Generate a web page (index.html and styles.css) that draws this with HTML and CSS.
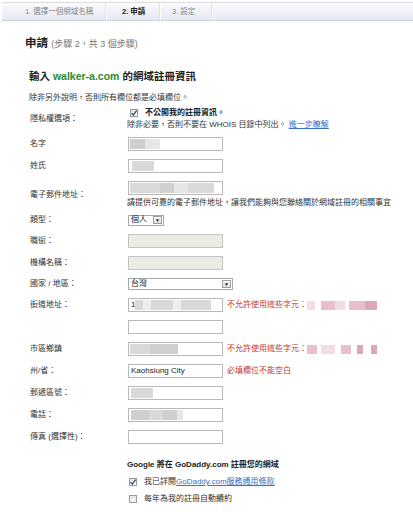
FILE: index.html
```html
<!DOCTYPE html>
<html lang="zh-Hant">

<head>
  <meta charset="UTF-8" />
  <meta name="viewport" content="width=device-width, initial-scale=1.0" />
  <title>申請</title>
  <link rel="stylesheet" href="styles.css">
</head>

<body>
  <!-- Step tabs -->
  <div class="tabs">
    <div class="tab tab-1">1. 選擇一個網域名稱</div>
    <div class="tab tab-2 active">2. 申請</div>
    <div class="tab tab-3">3. 設定</div>
  </div>

  <div class="page">
    <h1>申請 <span class="steps">(步驟 2，共 3 個步驟)</span></h1>
    <h2>輸入 <span class="domain">walker-a.com</span> 的網域註冊資訊</h2>
    <p class="note">除非另外說明，否則所有欄位都是必填欄位。</p>

    <form class="reg-form">
      <!-- Privacy -->
      <div class="row row-privacy">
        <div class="label">隱私權選項：</div>
        <div class="field">
          <div class="check-line">
            <span class="box checked"><svg viewBox="0 0 8 8" width="8" height="8"><path d="M1.5 4.2 L3.3 6 L6.6 1.6" fill="none" stroke="#2b3f6b" stroke-width="1.2"/></svg></span>
            <b>不公開我的註冊資訊。</b>
          </div>
          <div class="sub">除非必要，否則不要在 WHOIS 目錄中列出。 <a href="#">進一步瞭解</a></div>
        </div>
      </div>

      <!-- Name -->
      <div class="row row-first">
        <div class="label">名字</div>
        <div class="field">
          <div class="input"><span class="blur b1" style="width:15px"></span><span class="blur b3" style="width:15px"></span></div>
        </div>
      </div>

      <div class="row">
        <div class="label">姓氏</div>
        <div class="field">
          <div class="input"><span class="blur b2" style="width:22px;margin-left:2px"></span></div>
        </div>
      </div>

      <!-- Email -->
      <div class="row">
        <div class="label">電子郵件地址：</div>
        <div class="field">
          <div class="input"><span class="blur b2" style="width:30px"></span><span class="blur b1" style="width:14px"></span><span class="blur b3" style="width:14px"></span><span class="blur b2" style="width:26px"></span></div>
          <div class="help">請提供可靠的電子郵件地址，讓我們能夠與您聯絡關於網域註冊的相關事宜</div>
        </div>
      </div>

      <!-- Type -->
      <div class="row row-type">
        <div class="label">類型：</div>
        <div class="field">
          <div class="select small">個人<span class="arrow">▼</span></div>
        </div>
      </div>

      <div class="row">
        <div class="label">職銜：</div>
        <div class="field">
          <div class="input disabled"></div>
        </div>
      </div>

      <div class="row">
        <div class="label">機構名稱：</div>
        <div class="field">
          <div class="input disabled"></div>
        </div>
      </div>

      <div class="row">
        <div class="label">國家 / 地區：</div>
        <div class="field">
          <div class="select wide">台灣<span class="arrow">▼</span></div>
        </div>
      </div>

      <!-- Address -->
      <div class="row">
        <div class="label">街道地址：</div>
        <div class="field">
          <div class="input"><span class="txt">1</span><span class="blur b2" style="width:8px"></span><span class="blur b4" style="width:8px"></span><span class="blur b2" style="width:22px"></span><span class="blur b4" style="width:8px"></span><span class="blur b2" style="width:30px"></span></div>
          <span class="error">不允許使用這些字元：<span class="pink p1" style="width:8px"></span><span class="pink p2" style="width:14px;margin-left:6px"></span><span class="pink p1" style="width:10px"></span><span class="pink p2" style="width:16px;margin-left:4px"></span><span class="pink p3" style="width:12px"></span></span>
        </div>
      </div>

      <div class="row">
        <div class="label"></div>
        <div class="field">
          <div class="input"></div>
        </div>
      </div>

      <div class="row">
        <div class="label">市區鄉鎮</div>
        <div class="field">
          <div class="input"><span class="blur b2" style="width:20px"></span><span class="blur b1" style="width:28px"></span></div>
          <span class="error">不允許使用這些字元：<span class="pink p2" style="width:10px"></span><span class="pink p1" style="width:14px;margin-left:4px"></span><span class="pink p2" style="width:10px;margin-left:6px"></span><span class="pink p3" style="width:6px;margin-left:6px"></span><span class="pink p3" style="width:6px;margin-left:8px"></span></span>
        </div>
      </div>

      <div class="row">
        <div class="label">州/省：</div>
        <div class="field">
          <div class="input"><span class="txt">Kaohsiung City</span></div>
          <span class="error">必填欄位不能空白</span>
        </div>
      </div>

      <div class="row">
        <div class="label">郵遞區號：</div>
        <div class="field">
          <div class="input"><span class="blur b2" style="width:22px;margin-left:1px"></span></div>
        </div>
      </div>

      <div class="row">
        <div class="label">電話：</div>
        <div class="field">
          <div class="input"><span class="blur b1" style="width:18px;margin-left:1px"></span><span class="blur b2" style="width:14px"></span><span class="blur b1" style="width:14px"></span><span class="blur b3" style="width:6px"></span></div>
        </div>
      </div>

      <div class="row">
        <div class="label">傳真 (選擇性)：</div>
        <div class="field">
          <div class="input"></div>
        </div>
      </div>

      <!-- Terms -->
      <div class="terms">
        <div class="terms-title">Google 將在 GoDaddy.com 註冊您的網域</div>
        <div class="check-line terms-line">
          <span class="box checked"><svg viewBox="0 0 8 8" width="8" height="8"><path d="M1.5 4.2 L3.3 6 L6.6 1.6" fill="none" stroke="#2b3f6b" stroke-width="1.2"/></svg></span>
          <span>我已詳閱<a href="#">GoDaddy.com服務通用條款</a></span>
        </div>
        <div class="check-line terms-line">
          <span class="box"></span>
          <span>每年為我的註冊自動續約</span>
        </div>
      </div>
    </form>
  </div>
</body>

</html>
```

FILE: styles.css
```css
body {
  font-family: "Liberation Sans", Arial, "Noto Sans CJK TC", sans-serif;
  font-size: 8px;
  line-height: 12px;
  color: #333333;
  background-color: #ffffff;
  margin: 0;
}

/* step tabs */
.tabs {
  display: flex;
  margin: 2px 0 0 2px;
  height: 17px;
  border-top: 1px solid #dcdcdc;
  border-bottom: 1px solid #cfd2dc;
  background: linear-gradient(#fafbfd, #e6e9f2);
}

.tab {
  box-sizing: border-box;
  line-height: 17px;
  font-size: 7.5px;
  color: #8a8a8a;
  border-right: 1px solid #dfe2ea;
  box-shadow: 1px 0 0 #ffffff;
}

.tab-1 {
  width: 104px;
  padding-left: 23px;
}

.tab-2 {
  width: 54px;
  padding-left: 16px;
}

.tab-3 {
  width: 52px;
  padding-left: 12px;
}

.tab.active {
  color: #222222;
  font-weight: bold;
}

/* headings */
.page {
  padding-left: 25px;
}

h1 {
  margin: 15px 0 0 0;
  font-size: 11.5px;
  line-height: 14px;
  color: #222222;
}

h1 .steps {
  font-size: 9px;
  font-weight: normal;
  color: #777777;
}

h2 {
  margin: 18px 0 0 4px;
  font-size: 10.5px;
  line-height: 14px;
  color: #222222;
}

.domain {
  color: #2d8a2d;
}

.note {
  margin: 9px 0 0 4px;
}

/* form rows */
.reg-form {
  padding-left: 5px;
}

.row {
  display: flex;
  align-items: center;
  margin-top: 8px;
}

.row-privacy {
  margin-top: 3px;
}

.row-first {
  margin-top: 6px;
}

.row-type {
  margin-top: 5px;
}

.label {
  width: 98px;
  flex-shrink: 0;
  color: #333333;
}

.field {
  display: flex;
  flex-wrap: wrap;
  align-items: center;
}

.sub,
.help {
  width: 100%;
  margin-left: -1px;
}

.help {
  margin-top: 2px;
}

.sub a,
.terms a {
  color: #3a6fc4;
}

.check-line {
  display: flex;
  align-items: center;
  width: 100%;
}

.check-line b {
  color: #222222;
}

.box {
  box-sizing: border-box;
  display: inline-flex;
  width: 8px;
  height: 8px;
  margin: 0 7px 0 2px;
  border: 1px solid #9a9a9a;
  background: linear-gradient(#e4e4e4, #fafafa);
}

.box svg {
  margin: -1px;
}

/* inputs */
.input {
  box-sizing: border-box;
  display: flex;
  align-items: center;
  width: 95px;
  height: 14px;
  padding: 1px;
  border: 1px solid #b8b8b8;
  background: #ffffff;
  overflow: hidden;
}

.input.disabled {
  background: #ebebe4;
  border-color: #c4c4c0;
}

.txt {
  padding-left: 1px;
  color: #222222;
  line-height: 10px;
}

.blur {
  display: inline-block;
  height: 10px;
  filter: blur(0.6px);
}

.b1 { background: #cfcfcf; }
.b2 { background: #d9d9d9; }
.b3 { background: #e6e6e6; }
.b4 { background: #eeeeee; }

.select {
  box-sizing: border-box;
  display: flex;
  align-items: center;
  height: 12px;
  padding-left: 2px;
  border: 1px solid #a8a8a8;
  background: #ffffff;
  color: #222222;
}

.select.small {
  width: 36px;
  height: 11px;
}

.select.wide {
  width: 105px;
}

.arrow {
  box-sizing: border-box;
  margin-left: auto;
  margin-right: 1px;
  width: 9px;
  height: 8px;
  border: 1px solid #a0a0a0;
  background: linear-gradient(#fafafa, #dedede);
  font-size: 5px;
  line-height: 6px;
  text-align: center;
  color: #222222;
}

.error {
  display: inline-flex;
  align-items: center;
  margin-left: 4px;
  color: #c0392b;
}

.pink {
  display: inline-block;
  height: 9px;
  filter: blur(0.6px);
}

.p1 { background: #f3dde3; }
.p2 { background: #e9bfcc; }
.p3 { background: #dfa6b8; }

/* terms */
.terms {
  margin: 15px 0 0 97px;
}

.terms-title {
  font-weight: bold;
  color: #222222;
}

.terms-line {
  margin-top: 5px;
}
```
